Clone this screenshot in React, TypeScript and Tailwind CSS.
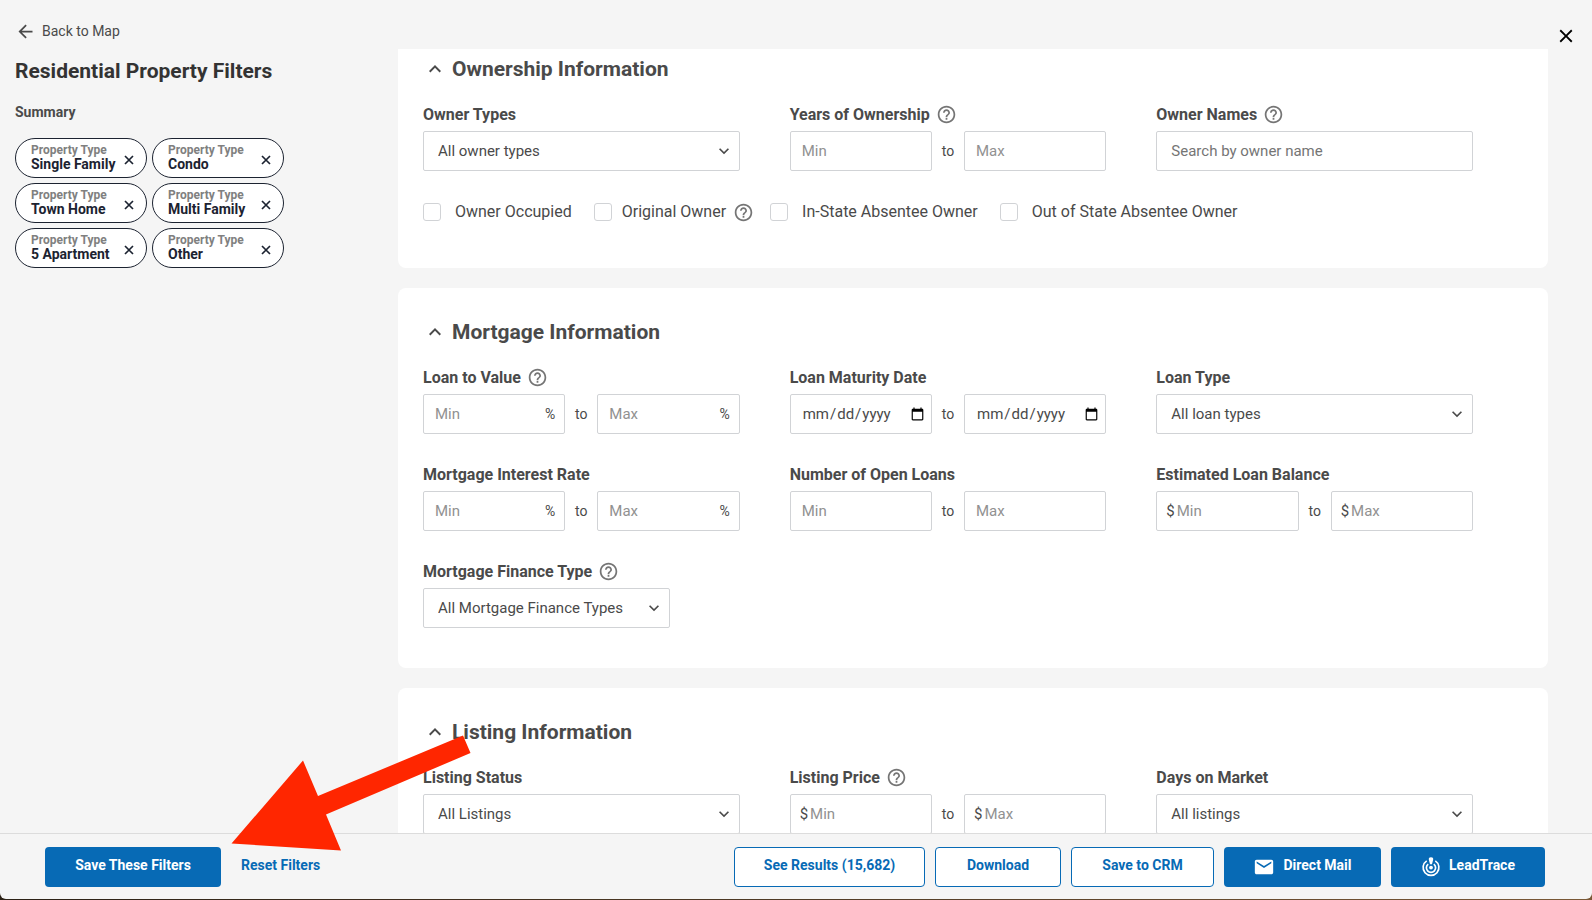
import { FunctionComponent, ReactNode, useState } from "react";
import {
  MdArrowBack,
  MdClose,
  MdEmail,
  MdExpandLess,
  MdExpandMore,
  MdHelpOutline,
} from "react-icons/md";

interface Filter {
  id: number;
  type: string;
  value: string;
}

interface FieldProps {
  label: string;
  htmlFor: string;
  help?: boolean;
  children: ReactNode;
}

interface RangeProps {
  id: string;
  label: string;
  help?: boolean;
  prefix?: string;
  suffix?: string;
  type?: "text" | "date";
}

interface SelectProps {
  id: string;
  label: string;
  option: string;
  help?: boolean;
  width?: string;
}

const initialFilters: Filter[] = [
  { id: 1, type: "Property Type", value: "Single Family" },
  { id: 2, type: "Property Type", value: "Condo" },
  { id: 3, type: "Property Type", value: "Town Home" },
  { id: 4, type: "Property Type", value: "Multi Family" },
  { id: 5, type: "Property Type", value: "5 Apartment" },
  { id: 6, type: "Property Type", value: "Other" },
];

const HelpButton = () => (
  <button type="button" aria-label="Help" className="text-[#757575]">
    <MdHelpOutline size={21} />
  </button>
);

const Field: FunctionComponent<FieldProps> = ({ label, htmlFor, help, children }) => (
  <div className="pr-[50px]">
    <div className="mb-1 flex h-[25px] items-center gap-1.5">
      <label htmlFor={htmlFor} className="text-base font-bold">
        {label}
      </label>
      {help && <HelpButton />}
    </div>
    {children}
  </div>
);

const RangeInput = ({ id, label, bound, prefix, suffix, type }: RangeProps & { bound: string }) => (
  <div className="flex h-10 min-w-0 flex-1 items-center rounded-xs border border-[#d1d3d6] bg-white">
    {prefix && <span className="pl-[9px] text-[15px]">{prefix}</span>}
    <input
      id={bound === "Min" ? id : id + "-max"}
      type={type ?? "text"}
      placeholder={bound}
      aria-label={`${label} ${bound}`}
      className={
        "h-full w-full min-w-0 bg-transparent text-[15px] outline-none placeholder:text-[#919191] " +
        (prefix ? "pl-0.5" : type === "date" ? "pl-[11px] pr-1" : "pl-[11px]")
      }
    />
    {suffix && <span className="pr-[9px] text-sm">{suffix}</span>}
  </div>
);

const RangeField: FunctionComponent<RangeProps> = (props) => (
  <Field label={props.label} htmlFor={props.id} help={props.help}>
    <div className="flex items-center">
      <RangeInput {...props} bound="Min" />
      <span className="w-8 text-center text-sm">to</span>
      <RangeInput {...props} bound="Max" />
    </div>
  </Field>
);

const SelectField: FunctionComponent<SelectProps> = ({ id, label, option, help, width }) => (
  <Field label={label} htmlFor={id} help={help}>
    <div className={"relative " + (width ?? "w-full")}>
      <select
        id={id}
        className="h-10 w-full appearance-none rounded-xs border border-[#d1d3d6] bg-white pl-3.5 pr-8 text-[15px] outline-none"
      >
        <option>{option}</option>
      </select>
      <MdExpandMore size={20} className="pointer-events-none absolute right-1.5 top-2.5" />
    </div>
  </Field>
);

const CheckField = ({ label, help }: { label: string; help?: boolean }) => (
  <div className="flex items-center gap-[7px]">
    <label className={"flex items-center " + (help ? "gap-2.5" : "gap-3.5")}>
      <input
        type="checkbox"
        className="size-[18px] appearance-none rounded-[3px] border border-[#d1d3d6] bg-white checked:bg-[#076ab5]"
      />
      {label}
    </label>
    {help && <HelpButton />}
  </div>
);

const Section = ({ title, className, children }: { title: string; className: string; children: ReactNode }) => {
  const [open, setOpen] = useState<boolean>(true);
  return (
    <section className={"bg-white pl-[25px] " + className}>
      <h2 className="mb-[21px] text-[21px] font-bold leading-6">
        <button type="button" onClick={() => setOpen(!open)} className="flex items-center gap-[5px]">
          {open ? <MdExpandLess size={24} /> : <MdExpandMore size={24} />}
          {title}
        </button>
      </h2>
      {open && children}
    </section>
  );
};

const RemoveIcon = () => (
  <svg width="14" height="14" viewBox="0 0 14 14" stroke="currentColor" strokeWidth="1.7">
    <path d="M3 3l8 8M11 3l-8 8" />
  </svg>
);

const LeadTraceIcon = () => (
  <svg width="20" height="20" viewBox="0 0 20 20" fill="none" stroke="currentColor" strokeWidth="1.7">
    <path d="M5.700 3.900a7.900 7.900 0 1 0 8.600 0" />
    <path d="M7.200 7.100a4.600 4.600 0 1 0 5.600 0" />
    <path d="M10 .2a2.200 2.200 0 0 1 2.200 2.400L11 7.200H9L7.800 2.600A2.200 2.200 0 0 1 10 .2z" fill="currentColor" stroke="none" />
    <circle cx="10" cy="10.600" r="1.900" fill="currentColor" stroke="none" />
  </svg>
);

const outlineButton =
  "h-10 rounded-[4px] border border-[#076ab5] bg-white pb-[3px] text-sm font-bold text-[#076ab5]";
const solidButton =
  "flex h-10 items-center justify-center gap-2 rounded-[4px] bg-[#076ab5] text-sm font-bold text-white";

const App: FunctionComponent = () => {
  const [filters, setFilters] = useState<Filter[]>(initialFilters);

  return (
    <div className="h-screen bg-linear-to-r from-[#2b2116] to-[#7a5836] pb-px font-[Roboto,sans-serif] text-[#4a4a4a]">
      <div className="relative flex h-full flex-col overflow-hidden rounded-b-md bg-[#f5f5f5]">
        <div className="flex min-h-0 flex-1">
          <aside className="w-[398px] shrink-0 px-[15px] pt-5">
            <a href="#map" className="flex h-[22px] items-center gap-1.5 text-sm">
              <MdArrowBack size={21} />
              Back to Map
            </a>
            <h1 className="mt-[17px] text-[21px] font-bold leading-6 text-[#333]">Residential Property Filters</h1>
            <h2 className="mt-[19px] text-sm font-bold">Summary</h2>
            <ul className="mt-4 grid w-[269px] grid-cols-2 gap-[5px]">
              {filters.map((filter) => (
                <li
                  key={filter.id}
                  className="flex h-10 items-center justify-between rounded-full border border-[#1c2331] bg-white pl-[15px] pr-2.5"
                >
                  <div className="whitespace-nowrap pb-[3px]">
                    <p className="text-xs font-bold leading-[14px] text-[#808080]">{filter.type}</p>
                    <p className="text-sm font-bold leading-[14px] text-[#1c2331]">{filter.value}</p>
                  </div>
                  <button
                    type="button"
                    aria-label={"Remove " + filter.value}
                    className="pt-1 text-[#1c2331]"
                    onClick={() => setFilters(filters.filter((f) => f.id !== filter.id))}
                  >
                    <RemoveIcon />
                  </button>
                </li>
              ))}
            </ul>
          </aside>

          <main className="mt-[49px] flex min-w-0 flex-1 flex-col gap-5 overflow-y-auto [scrollbar-width:none]">
            <Section title="Ownership Information" className="rounded-b-lg pb-11 pt-2">
              <div className="grid grid-cols-3 pr-[25px]">
                <SelectField id="owner-types" label="Owner Types" option="All owner types" />
                <RangeField id="years" label="Years of Ownership" help />
                <Field label="Owner Names" htmlFor="owner-names" help>
                  <input
                    id="owner-names"
                    type="text"
                    placeholder="Search by owner name"
                    className="h-10 w-full rounded-xs border border-[#d1d3d6] px-3.5 text-[15px] outline-none placeholder:text-[#757575]"
                  />
                </Field>
              </div>
              <div className="mt-[29px] flex h-6 items-center gap-[22px]">
                <CheckField label="Owner Occupied" />
                <div className="flex items-center gap-4">
                  <CheckField label="Original Owner" help />
                  <CheckField label="In-State Absentee Owner" />
                </div>
                <CheckField label="Out of State Absentee Owner" />
              </div>
            </Section>

            <Section title="Mortgage Information" className="rounded-lg pb-10 pt-8">
              <div className="grid grid-cols-3 gap-y-7 pr-[25px]">
                <RangeField id="ltv" label="Loan to Value" suffix="%" help />
                <RangeField id="maturity" label="Loan Maturity Date" type="date" />
                <SelectField id="loan-type" label="Loan Type" option="All loan types" />
                <RangeField id="interest" label="Mortgage Interest Rate" suffix="%" />
                <RangeField id="open-loans" label="Number of Open Loans" />
                <RangeField id="balance" label="Estimated Loan Balance" prefix="$" />
                <SelectField
                  id="finance-type"
                  label="Mortgage Finance Type"
                  option="All Mortgage Finance Types"
                  width="w-[247px]"
                  help
                />
              </div>
            </Section>

            <Section title="Listing Information" className="rounded-lg pb-10 pt-8">
              <div className="grid grid-cols-3 gap-y-7 pr-[25px]">
                <SelectField id="listing-status" label="Listing Status" option="All Listings" />
                <RangeField id="listing-price" label="Listing Price" prefix="$" help />
                <SelectField id="days" label="Days on Market" option="All listings" />
              </div>
            </Section>
          </main>

          <div className="w-11 shrink-0 pt-[25px]">
            <button type="button" aria-label="Close" className="ml-[7px] text-black">
              <MdClose size={22} />
            </button>
          </div>
        </div>

        <footer className="flex h-[66px] shrink-0 items-center gap-5 border-t border-[#dcdcdc] pl-[45px] pr-[47px]">
          <button type="button" className={solidButton + " w-44 pb-[3px]"}>
            Save These Filters
          </button>
          <button type="button" className="pb-[3px] text-sm font-bold text-[#076ab5]">
            Reset Filters
          </button>
          <div className="ml-auto flex gap-2.5">
            <button type="button" className={outlineButton + " w-[191px]"}>
              See Results (15,682)
            </button>
            <button type="button" className={outlineButton + " w-[126px]"}>
              Download
            </button>
            <button type="button" className={outlineButton + " w-[143px]"}>
              Save to CRM
            </button>
            <button type="button" className={solidButton + " w-[157px]"}>
              <MdEmail size={22} />
              <span className="pb-[3px]">Direct Mail</span>
            </button>
            <button type="button" className={solidButton + " w-[154px]"}>
              <LeadTraceIcon />
              <span className="pb-[3px]">LeadTrace</span>
            </button>
          </div>
        </footer>

        {/* arrow that points at the save button */}
        <svg
          className="pointer-events-none absolute bottom-12 left-[231px]"
          width="240"
          height="116"
          viewBox="0 0 240 116"
          fill="#ff2600"
        >
          <path d="M.5 108.5 72 25.5 87 61 232 .5 239.500 18 95 79.500 110 115.500z" />
        </svg>
      </div>
    </div>
  );
};

export default App;
